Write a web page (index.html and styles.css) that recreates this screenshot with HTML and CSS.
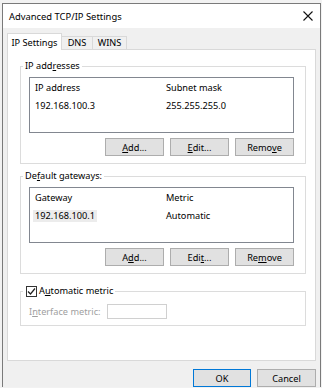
FILE: index.html
```html
<!DOCTYPE html>
<html lang="en">
<head>
    <meta charset="UTF-8">
    <title>Advanced TCP/IP Settings</title>
    <link rel="stylesheet" href="styles.css">
</head>
<body>
    <div class="window">
        <!-- Title bar -->
        <div class="titlebar">
            <span class="title">Advanced TCP/IP Settings</span>
            <svg class="close" width="10" height="10" viewBox="0 0 10 10">
                <path d="M0.5 0.5 L9.5 9.5 M9.5 0.5 L0.5 9.5" stroke="#111" stroke-width="1.1" fill="none"/>
            </svg>
        </div>

        <div class="content">
            <div class="tabs">
                <div class="tab active">IP Settings</div>
                <div class="tab">DNS</div>
                <div class="tab">WINS</div>
            </div>

            <div class="panel">
                <!-- IP addresses -->
                <fieldset class="group">
                    <legend>IP add<u>r</u>esses</legend>
                    <div class="listview">
                        <div class="lv-row lv-head"><span class="col1">IP address</span><span>Subnet mask</span></div>
                        <div class="lv-row"><span class="col1">192.168.100.3</span><span>255.255.255.0</span></div>
                    </div>
                    <div class="btn-row">
                        <button class="btn"><u>A</u>dd...</button>
                        <button class="btn"><u>E</u>dit...</button>
                        <button class="btn">Remo<u>v</u>e</button>
                    </div>
                </fieldset>

                <!-- Default gateways -->
                <fieldset class="group gateways">
                    <legend>De<u>f</u>ault gateways:</legend>
                    <div class="listview">
                        <div class="lv-row lv-head"><span class="col1">Gateway</span><span>Metric</span></div>
                        <div class="lv-row"><span class="col1"><span class="selected">192.168.100.1</span></span><span>Automatic</span></div>
                    </div>
                    <div class="btn-row">
                        <button class="btn">A<u>d</u>d...</button>
                        <button class="btn">Edi<u>t</u>...</button>
                        <button class="btn">Re<u>m</u>ove</button>
                    </div>
                </fieldset>

                <!-- Automatic metric -->
                <fieldset class="group metric">
                    <legend>
                        <label class="check">
                            <span class="box">
                                <svg width="9" height="9" viewBox="0 0 9 9">
                                    <path d="M1 4.5 L3.5 7 L8 1.5" stroke="#222" stroke-width="1.2" fill="none"/>
                                </svg>
                            </span>
                            <span>A<u>u</u>tomatic metric</span>
                        </label>
                    </legend>
                    <div class="metric-row">
                        <span class="disabled">I<u>n</u>terface metric:</span>
                        <span class="input"></span>
                    </div>
                </fieldset>
            </div>

            <div class="dialog-btns">
                <button class="btn default">OK</button>
                <button class="btn">Cancel</button>
            </div>
        </div>
    </div>
</body>
</html>
```

FILE: styles.css
```css
body {
    margin: 0;
    height: 388px;
    overflow: hidden;
    background-color: #f2f2f2;
    font-family: 'Noto Sans', 'Open Sans', sans-serif;
    font-size: 9.2px;
    color: #000;
}

.window {
    margin: 3px 0 0 2px;
    width: 319px;
    box-sizing: border-box;
    border: 1px solid #7a7a7a;
    border-bottom: none;
    background-color: #f0f0f0;
}

.titlebar {
    height: 24px;
    background-color: #ffffff;
    display: flex;
    align-items: center;
    justify-content: space-between;
    padding: 0 7px 0 6px;
}

.title {
    font-size: 9.4px;
}

.close {
    display: block;
}

.content {
    padding: 5px 4px 0 4px;
}

/* Tabs */
.tabs {
    display: flex;
    align-items: flex-end;
    height: 17px;
    margin-bottom: -1px;
    position: relative;
    z-index: 1;
}

.tab {
    box-sizing: border-box;
    height: 13px;
    margin-bottom: 1px;
    border-top: 1px solid #d9d9d9;
    border-right: 1px solid #d9d9d9;
    text-align: center;
    line-height: 12px;
}

.tab.active {
    width: 55px;
    height: 17px;
    margin-bottom: 0;
    border-left: 1px solid #d9d9d9;
    background-color: #ffffff;
    line-height: 18px;
}

.tab:nth-child(2) {
    width: 31px;
}

.tab:nth-child(3) {
    width: 34px;
}

.panel {
    box-sizing: border-box;
    width: 309px;
    height: 312px;
    border: 1px solid #d9d9d9;
    background-color: #ffffff;
    padding: 9px 9px 0 12px;
}

/* Group boxes */
.group {
    box-sizing: border-box;
    width: 286px;
    margin: 0;
    min-width: 0;
    padding: 4px 11px 7px 8px;
    border: 1px solid #dcdcdc;
}

.group legend {
    padding: 0 2px;
    margin-left: -6px;
    line-height: 14px;
}

.gateways {
    margin-top: 5px;
}

.listview {
    box-sizing: border-box;
    height: 56px;
    border: 1px solid #828790;
    padding: 1px 0 0 5px;
}

.lv-row {
    display: flex;
    height: 18px;
    line-height: 18px;
}

.col1 {
    width: 131px;
}

.selected {
    display: inline-block;
    background-color: #ececec;
    line-height: 12px;
    padding: 0 2px;
    margin-left: -2px;
}

.btn-row {
    display: flex;
    justify-content: flex-end;
    gap: 6px;
    margin-top: 5px;
}

.btn {
    box-sizing: border-box;
    width: 59px;
    height: 18px;
    padding: 0;
    border: 1px solid #adadad;
    background-color: #e1e1e1;
    font-family: inherit;
    font-size: 9.2px;
    color: #000;
}

/* Automatic metric */
.metric {
    margin-top: 10px;
    padding-bottom: 6px;
}

.metric legend {
    padding: 0 2px 0 3px;
}

.check {
    display: flex;
    align-items: center;
    gap: 2px;
}

.box {
    box-sizing: border-box;
    width: 11px;
    height: 11px;
    border: 1px solid #333;
    background-color: #fff;
    display: flex;
    align-items: center;
    justify-content: center;
}

.metric-row {
    display: flex;
    align-items: center;
    margin-top: 2px;
}

.disabled {
    width: 78px;
    color: #a0a0a0;
}

.input {
    box-sizing: border-box;
    width: 60px;
    height: 15px;
    border: 1px solid #d0d0d0;
    background-color: #ffffff;
}

/* Dialog buttons */
.dialog-btns {
    display: flex;
    justify-content: flex-end;
    gap: 6px;
    margin-top: 8px;
}

.btn.default {
    width: 58px;
    border-color: #0078d7;
}
```
